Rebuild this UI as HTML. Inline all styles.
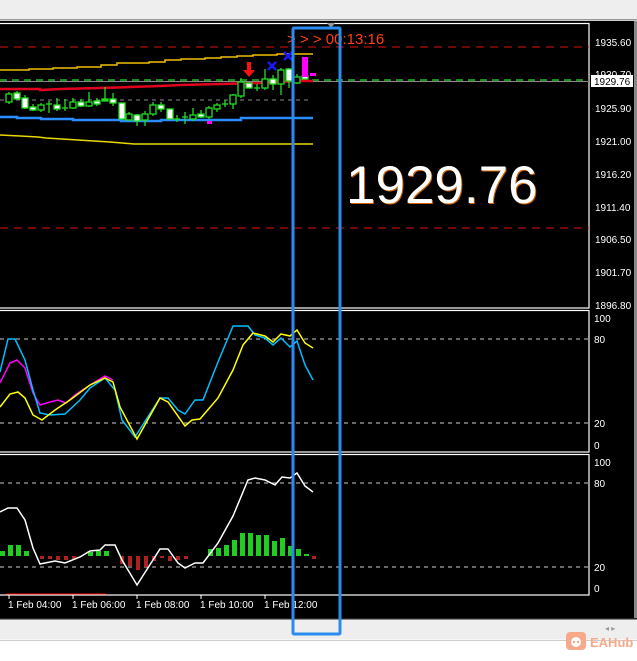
<!DOCTYPE html><html><head><meta charset="utf-8"><style>
body{margin:0;width:637px;height:656px;overflow:hidden;background:#fff;font-family:"Liberation Sans",sans-serif}
</style></head><body>
<svg width="637" height="656" xmlns="http://www.w3.org/2000/svg" font-family="Liberation Sans, sans-serif">
<rect width="637" height="656" fill="#fff"/>
<rect width="637" height="20" fill="#eeeeee"/>
<rect y="19" width="637" height="1.5" fill="#999"/>
<rect y="21" width="637" height="597" fill="#000"/>
<rect x="634" y="21" width="3" height="597" fill="#888"/>
<g fill="none" stroke="#fff" stroke-width="1.2">
<rect x="-2" y="23.5" width="591" height="284.5"/>
<rect x="-2" y="310.5" width="591" height="141.5"/>
<rect x="-2" y="454.5" width="591" height="140.5"/>
</g>
<line x1="0" y1="47" x2="589" y2="47" stroke="#e01010" stroke-dasharray="8,6"/>
<line x1="0" y1="228" x2="589" y2="228" stroke="#e01010" stroke-dasharray="8,6"/>
<line x1="0" y1="81.5" x2="589" y2="81.5" stroke="#888" stroke-width="1"/>
<line x1="0" y1="80" x2="589" y2="80" stroke="#22bb22" stroke-width="1.5" stroke-dasharray="7,5"/>
<line x1="0" y1="100" x2="310" y2="100" stroke="#888" stroke-dasharray="4,4"/>
<polyline fill="none" stroke="#f0c000" stroke-width="1.5" points="0,70 29,70 29,69 53,69 53,68 77,68 77,67 101,67 101,65 117,65 117,63 149,63 149,62 165,62 165,60 181,60 181,59 205,59 205,58 221,58 221,57 237,57 237,56 253,56 253,55 277,55 277,54 313,54"/>
<polyline fill="none" stroke="#e00020" stroke-width="2.5" points="0,89 40,89 40,90 60,89 100,88 130,87 160,86 180,85 220,84 260,83 300,81 313,81"/>
<polyline fill="none" stroke="#2a8cff" stroke-width="2.5" points="0,117 17,117 17,118 41,118 41,119 73,119 73,120 121,120 121,121 161,121 161,120 241,120 241,118 313,118"/>
<polyline fill="none" stroke="#e8d800" stroke-width="1.5" points="0,135 20,136 38,137 46,138 62,139 78,140 94,141 110,142 134,144 313,144"/>
<g stroke="#22dd22" stroke-width="1.3">
<line x1="9" y1="92" x2="9" y2="104"/><rect x="6" y="94" width="6" height="8" fill="#000"/>
<line x1="17" y1="91" x2="17" y2="100"/><rect x="14" y="93" width="6" height="6" fill="#fff"/>
<line x1="25" y1="95" x2="25" y2="109"/><rect x="22" y="98" width="6" height="10" fill="#fff"/>
<line x1="33" y1="104" x2="33" y2="111"/><rect x="30" y="107" width="6" height="3" fill="#fff"/>
<line x1="41" y1="103" x2="41" y2="112"/><rect x="38" y="105" width="6" height="5" fill="#000"/>
<line x1="49" y1="101" x2="49" y2="113"/><line x1="46" y1="104" x2="52" y2="104"/>
<line x1="57" y1="98" x2="57" y2="111"/><rect x="54" y="105" width="6" height="4" fill="#fff"/>
<line x1="65" y1="99" x2="65" y2="111"/><line x1="62" y1="108" x2="68" y2="108"/>
<line x1="73" y1="98" x2="73" y2="109"/><rect x="70" y="102" width="6" height="6" fill="#000"/>
<line x1="81" y1="99" x2="81" y2="107"/><rect x="78" y="102" width="6" height="4" fill="#fff"/>
<line x1="89" y1="92" x2="89" y2="107"/><rect x="86" y="102" width="6" height="4" fill="#000"/>
<line x1="97" y1="98" x2="97" y2="106"/><rect x="94" y="101" width="6" height="3" fill="#fff"/>
<line x1="105" y1="87" x2="105" y2="101"/><rect x="102" y="99" width="6" height="2" fill="#22dd22"/>
<line x1="113" y1="93" x2="113" y2="106"/><rect x="110" y="99" width="6" height="4" fill="#fff"/>
<rect x="119" y="103" width="6" height="16" fill="#fff"/>
<line x1="129" y1="112" x2="129" y2="120"/><rect x="126" y="114" width="6" height="6" fill="#000"/>
<line x1="137" y1="114" x2="137" y2="126"/><rect x="134" y="115" width="6" height="6" fill="#fff"/>
<line x1="145" y1="111" x2="145" y2="126"/><rect x="142" y="114" width="6" height="6" fill="#000"/>
<line x1="153" y1="102" x2="153" y2="116"/><rect x="150" y="105" width="6" height="9" fill="#000"/>
<line x1="161" y1="102" x2="161" y2="112"/><rect x="158" y="105" width="6" height="4" fill="#fff"/>
<rect x="167" y="109" width="6" height="10" fill="#fff"/>
<line x1="177" y1="115" x2="177" y2="122"/><line x1="174" y1="119" x2="180" y2="119"/>
<line x1="185" y1="112" x2="185" y2="124"/><line x1="182" y1="117" x2="188" y2="117"/>
<line x1="193" y1="108" x2="193" y2="121"/><rect x="190" y="115" width="6" height="4" fill="#000"/>
<line x1="201" y1="110" x2="201" y2="118"/><rect x="198" y="114" width="6" height="3" fill="#fff"/>
<line x1="209" y1="106" x2="209" y2="119"/><rect x="206" y="108" width="6" height="9" fill="#000"/>
<line x1="217" y1="103" x2="217" y2="112"/><rect x="214" y="105" width="6" height="4" fill="#000"/>
<line x1="225" y1="100" x2="225" y2="107"/><line x1="222" y1="104" x2="228" y2="104"/>
<line x1="233" y1="94" x2="233" y2="109"/><rect x="230" y="95" width="6" height="9" fill="#000"/>
<line x1="241" y1="78" x2="241" y2="98"/><rect x="238" y="82" width="6" height="14" fill="#000"/>
<rect x="246" y="83" width="6" height="5" fill="#fff"/>
<line x1="257" y1="84" x2="257" y2="91"/><line x1="254" y1="88" x2="260" y2="88"/>
<line x1="265" y1="69" x2="265" y2="90"/><rect x="262" y="79" width="6" height="9" fill="#000"/>
<line x1="273" y1="75" x2="273" y2="90"/><rect x="270" y="79" width="6" height="5" fill="#fff"/>
<line x1="281" y1="68" x2="281" y2="95"/><rect x="278" y="70" width="6" height="14" fill="#000"/>
<line x1="289" y1="68" x2="289" y2="88"/><rect x="286" y="69" width="6" height="12" fill="#fff"/>
<line x1="297" y1="74" x2="297" y2="84"/><rect x="294" y="77" width="6" height="6" fill="#000"/>
<rect x="302" y="76" width="6" height="3" fill="#fff"/>
</g>
<rect x="302" y="57" width="6" height="20" fill="#ff00ff"/>
<rect x="310" y="73" width="6" height="3" fill="#ff00ff"/>
<rect x="207" y="121" width="5" height="3" fill="#ff00ff"/>
<path d="M247,62 h4 v8 h4 l-6,7 l-6,-7 h4z" fill="#ff1010"/>
<g stroke="#1a1aff" stroke-width="2.5">
<line x1="268" y1="62" x2="276" y2="70"/><line x1="276" y1="62" x2="268" y2="70"/>
<line x1="284" y1="52" x2="292" y2="60"/><line x1="292" y1="52" x2="284" y2="60"/>
</g>
<text x="287" y="44" fill="#ff4010" font-size="15">&gt; &gt; &gt; 00:13:16</text>
<text x="346" y="203" fill="#fff" font-size="53" style="text-shadow:1px 1px 0 #d06000">1929.76</text>
<g fill="#fff" font-size="10">
<text x="595" y="46">1935.60</text><text x="595" y="78">1930.70</text>
<text x="595" y="112">1925.90</text><text x="595" y="145">1921.00</text>
<text x="595" y="178">1916.20</text><text x="595" y="211">1911.40</text>
<text x="595" y="243">1906.50</text><text x="595" y="276">1901.70</text>
<text x="595" y="309">1896.80</text>
<text x="594" y="322">100</text><text x="594" y="343">80</text><text x="594" y="427">20</text><text x="594" y="449">0</text>
<text x="594" y="466">100</text><text x="594" y="487">80</text><text x="594" y="571">20</text><text x="594" y="592">0</text>
</g>
<rect x="591" y="75" width="42" height="12" fill="#fff"/>
<text x="594" y="85" fill="#000" font-size="10">1929.76</text>
<g stroke="#ccc" stroke-dasharray="4,4"><line x1="0" y1="339" x2="589" y2="339"/><line x1="0" y1="423" x2="589" y2="423"/><line x1="0" y1="483" x2="589" y2="483"/><line x1="0" y1="567" x2="589" y2="567"/></g>
<g fill="none" stroke-width="1.5">
<polyline stroke="#ff00ff" points="0,383 10,363 17,360 25,368 33,393 40,405 50,402 58,400 66,403 75,395 90,385 105,376 113,380"/>
<polyline stroke="#00bfff" points="0,372 8,339 15,339 25,360 33,390 40,413 50,415 65,414 80,400 90,388 105,378 115,390 122,420 135,437 160,398 168,398 178,410 185,414 195,400 203,400 218,362 233,326 248,326 255,335 265,338 273,345 281,338 290,347 297,341 305,365 313,380"/>
<polyline stroke="#ffff00" points="0,407 10,394 18,392 25,398 33,415 42,420 55,410 70,400 90,385 105,378 113,382 120,407 137,439 160,398 168,402 185,426 192,420 200,419 218,398 233,370 243,345 253,333 265,336 273,342 281,334 290,336 297,330 305,343 313,348"/>
</g>
<g fill="#22cc22">
<rect x="0" y="551" width="5" height="5"/><rect x="8" y="545" width="5" height="11"/><rect x="16" y="545" width="5" height="11"/><rect x="24" y="551" width="5" height="5"/>
<rect x="88" y="552" width="5" height="4"/><rect x="96" y="551" width="5" height="5"/><rect x="104" y="551" width="5" height="5"/>
<rect x="208" y="549" width="5" height="7"/><rect x="216" y="548" width="5" height="8"/><rect x="224" y="545" width="5" height="11"/><rect x="232" y="540" width="5" height="16"/><rect x="240" y="533" width="5" height="23"/><rect x="248" y="533" width="5" height="23"/><rect x="256" y="535" width="5" height="21"/><rect x="264" y="535" width="5" height="21"/><rect x="272" y="541" width="5" height="15"/><rect x="280" y="538" width="5" height="18"/><rect x="288" y="546" width="5" height="10"/><rect x="296" y="549" width="5" height="7"/><rect x="304" y="554" width="5" height="2"/>
</g>
<g fill="#b02020">
<rect x="40" y="556" width="4" height="3"/><rect x="48" y="556" width="4" height="3"/><rect x="56" y="556" width="4" height="4"/><rect x="64" y="556" width="4" height="4"/><rect x="72" y="556" width="4" height="3"/>
<rect x="120" y="556" width="4" height="8"/><rect x="128" y="556" width="4" height="10"/><rect x="136" y="556" width="4" height="14"/><rect x="144" y="556" width="4" height="11"/><rect x="152" y="556" width="4" height="5"/><rect x="160" y="556" width="4" height="2"/><rect x="168" y="556" width="4" height="5"/><rect x="176" y="556" width="4" height="4"/><rect x="184" y="556" width="4" height="3"/><rect x="312" y="556" width="4" height="3"/>
</g>
<polyline fill="none" stroke="#fff" stroke-width="1.5" points="0,512 8,508 17,508 25,520 33,548 40,564 55,561 65,563 80,557 90,551 100,550 105,545 115,545 122,560 137,585 160,549 168,549 178,563 185,568 195,563 203,563 218,543 233,516 248,480 255,478 265,480 275,485 282,477 290,478 297,473 305,486 313,492"/>
<line x1="6" y1="594" x2="106" y2="594" stroke="#e00" stroke-width="1"/>
<g stroke="#fff"><line x1="9" y1="595" x2="9" y2="599"/><line x1="73" y1="595" x2="73" y2="599"/><line x1="137" y1="595" x2="137" y2="599"/><line x1="201" y1="595" x2="201" y2="599"/><line x1="265" y1="595" x2="265" y2="599"/></g>
<g fill="#fff" font-size="10">
<text x="8" y="608">1 Feb 04:00</text><text x="72" y="608">1 Feb 06:00</text><text x="136" y="608">1 Feb 08:00</text><text x="200" y="608">1 Feb 10:00</text><text x="264" y="608">1 Feb 12:00</text>
</g>
<rect y="618" width="637" height="1.5" fill="#222"/>
<rect y="619.5" width="637" height="20" fill="#eeeeee"/>
<rect y="640" width="637" height="1" fill="#ccc"/>
<text x="605" y="631" fill="#999" font-size="8">◂  ▸</text>
<rect x="566" y="632" width="20" height="18" rx="4" fill="#f8a98a"/>
<circle cx="576" cy="642" r="5" fill="#fff"/><circle cx="574" cy="642" r="1.2" fill="#f8a98a"/><circle cx="578" cy="642" r="1.2" fill="#f8a98a"/>
<text x="590" y="647" fill="#f8a98a" font-size="13" font-weight="bold">EAHub</text>
<polygon points="327,23 335,23 331,28" fill="#999"/>
<rect x="293" y="28" width="47" height="606" fill="none" stroke="#2a8cf0" stroke-width="3" rx="1"/>
</svg>
</body></html>
